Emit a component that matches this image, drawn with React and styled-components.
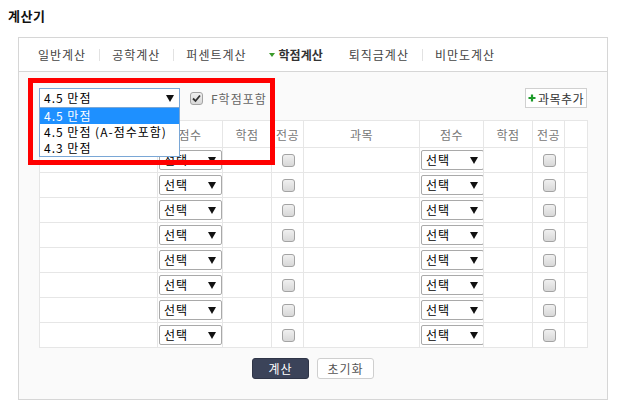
import React from "react";
import styled, { createGlobalStyle } from "styled-components";

const GlobalStyle = createGlobalStyle`
  body {
    margin: 0;
    background: #fff;
    font-family: "Noto Sans CJK KR", "Noto Sans", sans-serif;
    color: #333;
  }
`;

const Page = styled.div`
  position: relative;
  width: 620px;
  height: 400px;
  overflow: hidden;
`;

const Title = styled.h1`
  margin: 0;
  padding: 8px 8px 0;
  font-size: 13px;
  line-height: 16px;
  font-weight: bold;
  letter-spacing: 0.5px;
  color: #111;
`;

const Panel = styled.div`
  margin: 13px 0 0 18px;
  width: 588px;
  border: 1px solid #d6d6d6;
  background: #fafafa;
`;

const TabBar = styled.ul`
  display: flex;
  align-items: center;
  height: 33px;
  margin: 0;
  padding: 0 0 0 19px;
  list-style: none;
  background: #fff;
  border-bottom: 1px solid #d6d6d6;
`;

const Tab = styled.li`
  position: relative;
  display: flex;
  align-items: center;
  padding: 0 13px;
  font-size: 12px;
  line-height: 16px;
  letter-spacing: ${({ $active }) => ($active ? "0" : "1px")};
  color: ${({ $active }) => ($active ? "#333" : "#444")};
  font-weight: ${({ $active }) => ($active ? "bold" : "normal")};

  &:first-child {
    padding-left: 0;
  }

  & + &::before {
    content: "";
    position: absolute;
    left: 0;
    top: 2px;
    width: 1px;
    height: 12px;
    background: #e2e2e2;
  }
`;

const ActiveMark = styled.span`
  width: 0;
  height: 0;
  margin: 0 4px 0 -4px;
  border-left: 3px solid transparent;
  border-right: 3px solid transparent;
  border-top: 4px solid #3a9a2a;
`;

const Content = styled.div`
  padding: 16px 20px 20px;
`;

const Toolbar = styled.div`
  display: flex;
  align-items: center;
  height: 20px;
`;

const SelectWrap = styled.div`
  position: relative;
`;

const FakeSelect = styled.div`
  display: flex;
  align-items: center;
  justify-content: space-between;
  box-sizing: border-box;
  width: ${({ $width }) => $width}px;
  height: 20px;
  padding: 0 5px 0 4px;
  background: #fff;
  border: 1px solid ${({ $focus }) => ($focus ? "#7aa7d6" : "#a9a9a9")};
  border-radius: ${({ $focus }) => ($focus ? "0" : "2px")};
  font-size: 12px;
  line-height: 16px;
  letter-spacing: 1px;
  color: #000;
`;

const Arrow = styled.span`
  width: 0;
  height: 0;
  border-left: 4px solid transparent;
  border-right: 4px solid transparent;
  border-top: 7px solid #111;
`;

const DropList = styled.ul`
  position: absolute;
  left: 0;
  top: 19px;
  z-index: 2;
  box-sizing: border-box;
  width: 141px;
  margin: 0;
  padding: 0;
  list-style: none;
  background: #fff;
  border: 1px solid #7aa7d6;
`;

const DropOption = styled.li`
  height: 16px;
  padding: 0 4px;
  font-size: 12px;
  line-height: 16px;
  letter-spacing: 1px;
  white-space: nowrap;
  color: ${({ $selected }) => ($selected ? "#fff" : "#000")};
  background: ${({ $selected }) => ($selected ? "#1e90ff" : "#fff")};
`;

const CheckLabel = styled.label`
  display: flex;
  align-items: center;
  margin-left: 10px;
  font-size: 12px;
  letter-spacing: 1px;
  color: #666;
`;

const Box = styled.span`
  display: inline-flex;
  align-items: center;
  justify-content: center;
  box-sizing: border-box;
  width: 13px;
  height: 13px;
  border: 1px solid #a3a3a3;
  border-radius: 3px;
  background: linear-gradient(#f0f0f0, #d8d8d8);
  margin-right: ${({ $gap }) => $gap || 0}px;
`;

const AddButton = styled.button`
  display: flex;
  align-items: center;
  justify-content: center;
  box-sizing: border-box;
  margin-left: auto;
  width: 62px;
  height: 20px;
  padding: 0;
  background: #fff;
  border: 1px solid #d0d0d0;
  font-family: inherit;
  font-size: 12px;
  letter-spacing: 0.5px;
  color: #333;
  gap: 2px;
`;

const Table = styled.table`
  margin-top: 12px;
  width: 548px;
  border-collapse: collapse;
  table-layout: fixed;
  background: #fff;

  th, td {
    border: 1px solid #e6e6e6;
    padding: 0;
    text-align: center;
  }
`;

const HeadCell = styled.th`
  height: 26px;
  font-size: 12px;
  font-weight: normal;
  letter-spacing: 0.5px;
  color: #777;
`;

const Cell = styled.td`
  height: 24px;
  padding: 0 0 0 1px !important;
  text-align: ${({ $left }) => ($left ? "left" : "center")} !important;
`;

const Footer = styled.div`
  display: flex;
  justify-content: center;
  gap: 8px;
  margin-top: 10px;
`;

const Btn = styled.button`
  width: ${({ $width }) => $width}px;
  height: 21px;
  padding: 0;
  font-family: inherit;
  font-size: 12px;
  letter-spacing: 1px;
  border-radius: 3px;
  border: 1px solid ${({ $primary }) => ($primary ? "#2f3547" : "#cfcfcf")};
  background: ${({ $primary }) => ($primary ? "#3b4359" : "#fff")};
  color: ${({ $primary }) => ($primary ? "#fff" : "#555")};
`;

const Highlight = styled.div`
  position: absolute;
  left: 28px;
  top: 78px;
  width: 247px;
  height: 87px;
  box-sizing: border-box;
  border: 5px solid #ff0000;
  z-index: 3;
  pointer-events: none;
`;

const tabs = ["일반계산", "공학계산", "퍼센트계산", "학점계산", "퇴직금계산", "비만도계산"];
const scales = ["4.5 만점", "4.5 만점 (A-점수포함)", "4.3 만점"];
const widths = [118, 65, 49, 32, 116, 64, 49, 32, 23];

const Check = () => (
  <svg width="9" height="9" viewBox="0 0 9 9">
    <path d="M1 4.5 L3.5 7 L8 1.5" fill="none" stroke="#333" strokeWidth="1.8" />
  </svg>
);

const Half = () => (
  <>
    <Cell />
    <Cell $left>
      <FakeSelect $width={63}>
        선택 <Arrow />
      </FakeSelect>
    </Cell>
    <Cell />
    <Cell>
      <Box />
    </Cell>
  </>
);

export default function App() {
  return (
    <Page>
      <GlobalStyle />
      <Title>계산기</Title>
      <Panel>
        <TabBar>
          {tabs.map((t) => (
            <Tab key={t} $active={t === "학점계산"}>
              {t === "학점계산" && <ActiveMark />}
              {t}
            </Tab>
          ))}
        </TabBar>
        <Content>
          <Toolbar>
            <SelectWrap>
              <FakeSelect $width={141} $focus>
                4.5 만점 <Arrow />
              </FakeSelect>
              <DropList>
                {scales.map((s, i) => (
                  <DropOption key={s} $selected={i === 0}>
                    {s}
                  </DropOption>
                ))}
              </DropList>
            </SelectWrap>
            <CheckLabel>
              <Box $gap={8}>
                <Check />
              </Box>
              F학점포함
            </CheckLabel>
            <AddButton>
              <svg width="8" height="8" viewBox="0 0 8 8">
                <path d="M4 0.5 V7.5 M0.5 4 H7.5" stroke="#1d9a2a" strokeWidth="2.2" />
              </svg>
              과목추가
            </AddButton>
          </Toolbar>
          <Table>
            <colgroup>
              {widths.map((w, i) => (
                <col key={i} style={{ width: w }} />
              ))}
            </colgroup>
            <thead>
              <tr>
                <HeadCell>과목</HeadCell>
                <HeadCell>점수</HeadCell>
                <HeadCell>학점</HeadCell>
                <HeadCell>전공</HeadCell>
                <HeadCell>과목</HeadCell>
                <HeadCell>점수</HeadCell>
                <HeadCell>학점</HeadCell>
                <HeadCell>전공</HeadCell>
                <HeadCell />
              </tr>
            </thead>
            <tbody>
              {Array.from({ length: 8 }).map((_, r) => (
                <tr key={r}>
                  <Half />
                  <Half />
                  <Cell />
                </tr>
              ))}
            </tbody>
          </Table>
          <Footer>
            <Btn $primary $width={57}>계산</Btn>
            <Btn $width={57}>초기화</Btn>
          </Footer>
        </Content>
      </Panel>
      <Highlight />
    </Page>
  );
}
